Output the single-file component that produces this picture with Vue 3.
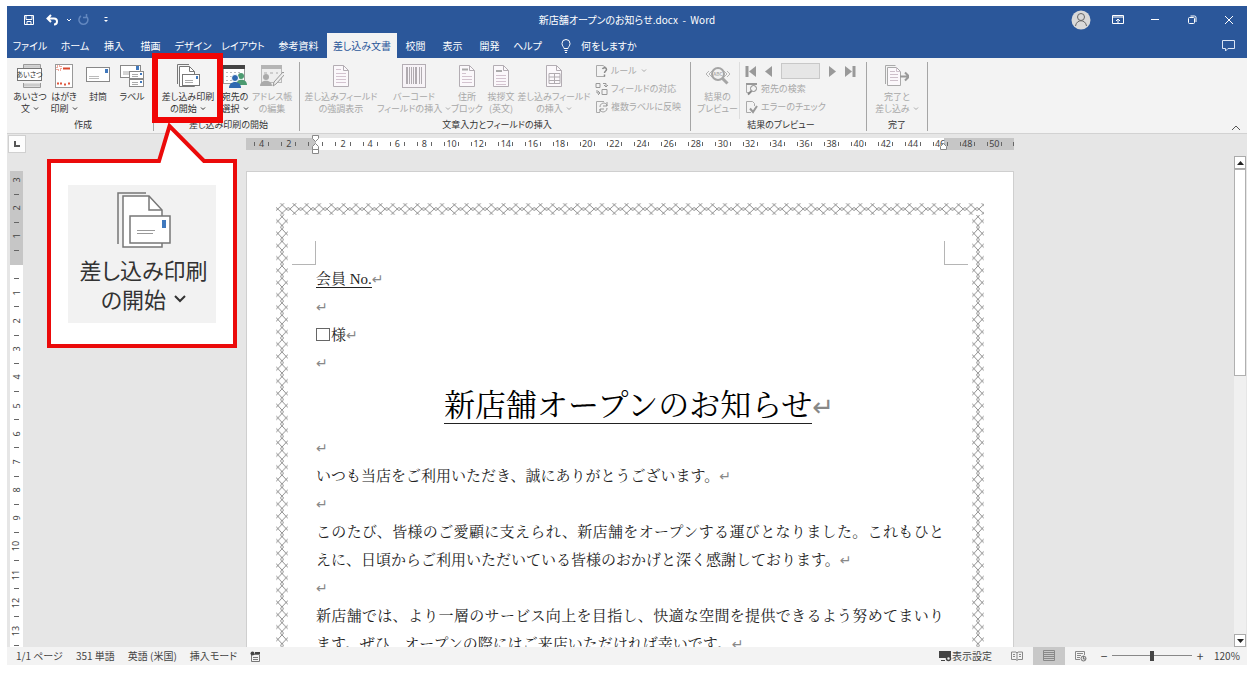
<script setup>
import { ref } from 'vue'

const tabs = ['ファイル', 'ホーム', '挿入', '描画', 'デザイン', 'レイアウト', '参考資料', '差し込み文書', '校閲', '表示', '開発', 'ヘルプ']
const activeTab = ref('差し込み文書')
const zoom = ref(50)
const record = ref('')

const page = '<path d="M4.500 1.500h10l5 5v16h-15z" fill="#fbf8fb" stroke="#b3adb3"/><path d="M14.500 1.500v5h5" fill="none" stroke="#b3adb3"/>'
const icons = {
  greeting: '<path d="M6.500 4V.5h17V4M6.500 19v4.500h17V19" fill="#ddd" stroke="#999"/><path d="M7 2.500h16M7 21h16" stroke="#ccc" stroke-width="2"/><rect x=".5" y="4.500" width="24" height="12" fill="#fff" stroke="#777"/><text x="12.500" y="13" font-size="7" text-anchor="middle" fill="#333">あいさつ</text>',
  postcard: '<rect x="4.500" y=".5" width="17" height="23" fill="#fff" stroke="#999"/><rect x="6" y="2" width="4" height="4" fill="none" stroke="#e0563c" stroke-dasharray="1 1"/><path d="M12 4.500h7" stroke="#d9472b" stroke-width="2"/><path d="M6 19.500h6M13 20.500h2M17 19.500h3" stroke="#e0563c" stroke-width="2" stroke-dasharray="2 1"/>',
  envelope: '<rect x="1.500" y="3.500" width="23" height="14" fill="#fff" stroke="#888"/><rect x="20" y="5" width="3" height="4" fill="#3f78bd"/><path d="M4 12.500h10M4 14.500h10" stroke="#bbb"/>',
  label: '<rect x="1.500" y="1.500" width="20" height="12" fill="#fff" stroke="#888"/><rect x="17" y="2" width="3" height="4" fill="#3f78bd"/><path d="M4 8h6M4 10h6" stroke="#aaa"/><rect x="10.500" y="7.500" width="14" height="7" fill="#fff" stroke="#888"/><rect x="10.500" y="15.500" width="14" height="7" fill="#fff" stroke="#888"/><path d="M13 10.500h6M13 12.500h6M13 18.500h6M13 20.500h6" stroke="#aaa"/><path d="M22 9v2M22 17v2" stroke="#3f78bd" stroke-width="2"/>',
  merge: '<path d="M2.500 20V.5H14" fill="none" stroke="#777"/><path d="M4.500 2.500h10l5 5v15h-15z" fill="#fff" stroke="#777"/><path d="M14.500 2.500v5h5" fill="none" stroke="#777"/><rect x="7.500" y="10.500" width="17" height="11" fill="#fff" stroke="#777"/><rect x="21" y="12" width="2" height="3" fill="#3f78bd"/><path d="M10 16.500h8M10 18.500h8" stroke="#aaa"/>',
  recipients: '<rect x="1.500" y="2.500" width="21" height="17" fill="#fff" stroke="#999"/><path d="M1 3h22" stroke="#444" stroke-width="4"/><path d="M4 8.500h16M4 12.500h16M4 16.500h16" stroke="#bbb" stroke-dasharray="2 2"/><circle cx="19" cy="12" r="3" fill="#4c9a70"/><path d="M14 21c0-7 11-7 11 0z" fill="#4c9a70"/><circle cx="13" cy="14" r="3.500" fill="#2e68b0" stroke="#fff"/><path d="M7 24c0-8 12-8 12 0z" fill="#2e68b0"/>',
  editlist: '<rect x="1.500" y="2.500" width="20" height="16" fill="#eee" stroke="#bbb"/><path d="M1 3h21" stroke="#b5b5b5" stroke-width="4"/><path d="M4 9h14" stroke="#ccc" stroke-width="2" stroke-dasharray="3 3"/><circle cx="6" cy="13" r="3" fill="#aaa"/><path d="M0 22c0-7 12-7 12 0z" fill="#aaa"/><path d="M13 22l1-4 9-10 2 2-9 10z" fill="#eee" stroke="#999"/>',
  highlight: page + '<path d="M7 5.500h5M7 9.500h10M7 12.500h10M7 15.500h10M7 18.500h10" stroke="#d3c3cf"/>',
  barcode: '<rect x=".5" y=".5" width="23" height="23" fill="#f7f3f7" stroke="#b3adb3"/><path d="M5 3v17M14 3v17" stroke="#b0abb0" stroke-width="2"/><path d="M7.500 3v17M9.500 3v17M11.500 3v17M17.500 3v17M19.500 3v17" stroke="#b0abb0"/>',
  address: page + '<path d="M7 5.500h6" stroke="#aaa" stroke-width="2"/><path d="M7 9.500h4M7 12.500h10M7 15.500h10M7 18.500h10" stroke="#d3c3cf"/>',
  salutation: page + '<path d="M7 7h6" stroke="#aaa" stroke-width="2"/><path d="M7 11.500h10M7 14.500h10M7 17.500h10M7 20.500h10" stroke="#d3c3cf"/>',
  field: page + '<path d="M7 9.500h11v10H7zM7 13h11M7 16.500h11M12.500 9.500v10" fill="none" stroke="#b0abb0"/>',
  preview: '<path d="M3 7L0 10l3 3M6 7l-3 3 3 3M21 7l3 3-3 3M18 7l3 3-3 3" fill="none" stroke="#b5b5b5"/><circle cx="12" cy="10" r="6" fill="#f1f1f1" stroke="#a5a5a5" stroke-width="2"/><path d="M16.500 14.500l5 5" stroke="#a5a5a5" stroke-width="3"/><text x="12" y="12" font-size="5" text-anchor="middle" fill="#999">ABC</text>',
  finish: '<path d="M.5 20V1.500h10" fill="none" stroke="#aaa"/><path d="M2.500 3.500h9l4 4v14h-13z" fill="#fbf8fb" stroke="#aaa"/><path d="M11.500 3.500v4h4M5 7.500h5M5 10.500h8M5 13.500h8M5 16.500h8" fill="none" stroke="#cdc0ca"/><path d="M15 12.500h9M20 8.500l4 4-4 4" fill="none" stroke="#999" stroke-width="2"/>',
  rules: '<path d="M8 1.500H1.500v11H10M8 1.500l3 2" fill="none" stroke="#aaa"/><path d="M7.500 5c1-2 4-1.500 4 .5 0 1.500-2 1.500-2 3.500M9.500 10.500v2" fill="none" stroke="#888" stroke-width="1.500"/>',
  match: '<path d="M1 1.500h4v4H1zM7 7.500h5v5H7z" fill="none" stroke="#999"/><path d="M8 1.500h3v3M9 3l2 2 2-2M2 8v3h3M3 9l2 2-2 2" fill="none" stroke="#999"/>',
  update: '<path d="M9 1.500H1.500v11H5" fill="none" stroke="#aaa"/><path d="M5 7c0-5 7-5 7-1M12 2v4H8M12 8c0 5-7 5-7 1M5 12V9h4" fill="none" stroke="#999"/>',
  find: '<path d="M4 10.500H1.500v-9h10" fill="none" stroke="#aaa"/><path d="M1 2h11" stroke="#999" stroke-width="2"/><circle cx="8.500" cy="6.500" r="3" fill="#f3f3f3" stroke="#888"/><path d="M6.500 9L3 12.500" stroke="#888" stroke-width="2"/>',
  check: '<path d="M9.500 6V3.500l-2-2h-6v11H6" fill="none" stroke="#aaa"/><path d="M5 8.500l3 3.500 4-6" fill="none" stroke="#999" stroke-width="2"/>'
}

const groups = [
  { key: 'create', name: '作成', buttons: [
    { icon: 'greeting', a: 'あいさつ', b: '文', drop: true },
    { icon: 'postcard', a: 'はがき', b: '印刷', drop: true },
    { icon: 'envelope', a: '封筒', b: '' },
    { icon: 'label', a: 'ラベル', b: '' }] },
  { key: 'start', name: '差し込み印刷の開始', buttons: [
    { icon: 'merge', a: '差し込み印刷', b: 'の開始', drop: true },
    { icon: 'recipients', a: '宛先の', b: '選択', drop: true },
    { icon: 'editlist', a: 'アドレス帳', b: 'の編集', off: true }] },
  { key: 'write', name: '文章入力とフィールドの挿入', buttons: [
    { icon: 'highlight', a: '差し込みフィールド', b: 'の強調表示', off: true },
    { icon: 'barcode', a: 'バーコード', b: 'フィールドの挿入', drop: true, off: true },
    { icon: 'address', a: '住所', b: 'ブロック', off: true },
    { icon: 'salutation', a: '挨拶文', b: '(英文)', off: true },
    { icon: 'field', a: '差し込みフィールド', b: 'の挿入', drop: true, off: true }],
    rows: [
      { icon: 'rules', text: 'ルール', drop: true },
      { icon: 'match', text: 'フィールドの対応' },
      { icon: 'update', text: '複数ラベルに反映' }] },
  { key: 'preview', name: '結果のプレビュー', nav: true, buttons: [
    { icon: 'preview', a: '結果の', b: 'プレビュー', off: true }],
    rows: [
      { icon: 'find', text: '宛先の検索' },
      { icon: 'check', text: 'エラーのチェック' }] },
  { key: 'finish', name: '完了', buttons: [
    { icon: 'finish', a: '完了と', b: '差し込み', drop: true, off: true }] }
]

const hCells = Array.from({ length: 28 }, (_, i) => Math.abs(i * 2 - 4))
const vCells = [3, 2, 1, 0, 1, 2, 3, 4, 5, 6, 7, 8, 9, 10, 11, 12, 13]
</script>

<template>
  <div class="shell">
    <header class="top">
      <div class="titlebar">
        <div class="quick">
          <button aria-label="上書き保存"><svg width="12" height="12"><path d="M1.500 1.500h9v9h-9zM3 1.500v4h6v-4M4 10.500v-3h4v3" fill="none" stroke="#fff" /></svg></button>
          <button aria-label="元に戻す"><svg width="14" height="12"><path d="M5 1L1.500 4.500 5 8M2 4.500h6c4 0 4 6 0 6" fill="none" stroke="#fff" stroke-width="2" /></svg></button>
          <button class="slim" aria-label="元に戻す履歴"><svg width="6" height="4"><path d="M1 1l2 2 2-2" fill="none" stroke="#fff" /></svg></button>
          <button aria-label="やり直し"><svg width="12" height="12"><path d="M9.500 2.500A4.500 4.500 0 1 1 4 2M9.500 0v3.500H6" fill="none" stroke="#6287bf" stroke-width="1.500" /></svg></button>
          <button class="last" aria-label="ツールバーの設定"><svg width="6" height="7"><path d="M1.500 1.500h3" stroke="#fff" /><path d="M1 4h4L3 6z" fill="#fff" /></svg></button>
        </div>
        <h1>新店舗オープンのお知らせ.docx&nbsp; -&nbsp; Word</h1>
        <div class="win">
          <button aria-label="アカウント"><svg width="20" height="20"><circle cx="10" cy="10" r="9.500" fill="#d9d9d9" /><circle cx="10" cy="7" r="3.500" fill="none" stroke="#666" /><path d="M4.500 16c1-7 10-7 11 0" fill="none" stroke="#666" /></svg></button>
          <button aria-label="リボンの表示オプション"><svg width="12" height="10"><path d="M.5 .5h11v8H.5zM.5 2h11M6 8V4M4 6l2-2 2 2" fill="none" stroke="#fff" /></svg></button>
          <button aria-label="最小化"><svg width="10" height="10"><path d="M1 4.500h8" stroke="#fff" /></svg></button>
          <button aria-label="元のサイズに戻す"><svg width="10" height="10"><rect x="1.500" y="2.500" width="6" height="6" rx="1" fill="none" stroke="#fff" /><path d="M3.500 1h4q1.500 0 1.500 1.500V7" fill="none" stroke="#fff" /></svg></button>
          <button aria-label="閉じる"><svg width="10" height="10"><path d="M1 1l8 8M9 1L1 9" stroke="#fff" /></svg></button>
        </div>
      </div>
      <div class="tabbar">
        <nav class="tabs">
          <button v-for="t in tabs" :key="t" :class="{ active: t === activeTab }" @click="activeTab = t">{{ t }}</button>
        </nav>
        <button class="tell"><svg width="10" height="14"><path d="M3 9.500C3 8 1 7 1 4.500a4 4 0 0 1 8 0C9 7 7 8 7 9.500zM3.500 11.500h3M4 13.500h2" fill="none" stroke="#fff" /></svg>何をしますか</button>
        <button class="comment" aria-label="コメント"><svg width="13" height="12"><path d="M.5 .5h12v8H6l-2.500 2.500V8.500h-3z" fill="none" stroke="#dbe5f5" /></svg></button>
      </div>
    </header>

    <section class="ribbon">
      <div v-for="g in groups" :key="g.key" class="group" :class="g.key">
        <div class="body">
          <button v-for="b in g.buttons" :key="b.icon" class="big" :class="{ off: b.off }">
            <svg :width="b.off ? 24 : 26" height="25" v-html="icons[b.icon]"></svg>
            <span>{{ b.a }}</span>
            <span v-if="b.b">{{ b.b }}<svg v-if="b.drop" class="chev" width="6" height="4"><path d="M1 .5l2 2 2-2" fill="none" stroke="currentColor" /></svg></span>
          </button>
          <div v-if="g.rows" class="rows">
            <div v-if="g.nav" class="nav">
              <button aria-label="先頭のレコード"><svg width="12" height="11"><path d="M2 0v11" stroke="#999" stroke-width="3" /><path d="M11 0v11L4 5.500z" fill="#999" /></svg></button>
              <button aria-label="前のレコード"><svg width="8" height="11"><path d="M7 0v11L0 5.500z" fill="#999" /></svg></button>
              <input v-model="record" aria-label="レコード" />
              <button aria-label="次のレコード"><svg width="8" height="11"><path d="M1 0v11l7-5.500z" fill="#999" /></svg></button>
              <button aria-label="最後のレコード"><svg width="12" height="11"><path d="M10 0v11" stroke="#999" stroke-width="3" /><path d="M1 0v11l7-5.500z" fill="#999" /></svg></button>
            </div>
            <button v-for="r in g.rows" :key="r.icon" class="small">
              <svg width="14" height="14" v-html="icons[r.icon]"></svg>{{ r.text }}<svg v-if="r.drop" class="chev" width="6" height="4"><path d="M1 .5l2 2 2-2" fill="none" stroke="currentColor" /></svg>
            </button>
          </div>
        </div>
        <h2>{{ g.name }}</h2>
      </div>
      <button class="collapse" aria-label="リボンを折りたたむ"><svg width="10" height="6"><path d="M1 5l4-4 4 4" fill="none" stroke="#555" /></svg></button>
    </section>

    <main class="work">
      <button class="corner" aria-label="タブの種類"><svg width="6" height="6"><path d="M1 0v5h5" fill="none" stroke="#555" stroke-width="2" /></svg></button>
      <div class="hruler-row">
        <div class="hruler">
          <span v-for="(n, i) in hCells" :key="i" class="hcell"><i></i>{{ n || '' }}<i></i></span>
          <i class="end"></i>
          <svg class="indent" width="9" height="20"><path d="M1.500 .5h6v3l-3 3-3-3zM4.500 8.500l3 3v3h-6v-3zM1.500 14.500h6v4h-6z" fill="#fff" stroke="#888" /></svg>
          <svg class="rindent" width="9" height="8"><path d="M4.500 .5l3 3v3h-6v-3z" fill="#fff" stroke="#888" /></svg>
        </div>
      </div>
      <div class="vruler">
        <div class="vcells">
          <template v-for="(n, i) in vCells" :key="i">
            <span><b>{{ n || '' }}</b></span>
            <span><i></i></span>
          </template>
        </div>
      </div>
      <div class="canvas">
        <article class="page">
          <svg class="defs" width="0" height="0">
            <defs>
              <pattern id="lace-h" width="12.300" height="12" patternUnits="userSpaceOnUse"><path d="M8.200 0L0 7.600M4.100 0l8.200 7.600M8.200 12L0 4.400M4.100 12l8.200-7.600" fill="none" stroke="#777" stroke-width=".8" /></pattern>
              <pattern id="lace-v" width="12" height="12.300" patternUnits="userSpaceOnUse"><path d="M0 8.200L7.600 0M0 4.100l7.600 8.200M12 8.200L4.400 0M12 4.100l-7.600 8.200" fill="none" stroke="#777" stroke-width=".8" /></pattern>
            </defs>
          </svg>
          <svg class="lace top-lace"><rect width="100%" height="12" fill="url(#lace-h)" /></svg>
          <svg class="lace"><rect width="12" height="100%" fill="url(#lace-v)" /></svg>
          <div class="sheet">
            <div class="crops"><i class="crop left"></i><i class="crop right"></i></div>
            <div class="text">
              <p><u>会員 No.</u><em>↵</em></p>
              <p><em>↵</em></p>
              <p><span class="blank"></span>様<em>↵</em></p>
              <p><em>↵</em></p>
              <h3><u>新店舗オープンのお知らせ</u><em>↵</em></h3>
              <p><em>↵</em></p>
              <p>いつも当店をご利用いただき、誠にありがとうございます。<em>↵</em></p>
              <p><em>↵</em></p>
              <p>このたび、皆様のご愛顧に支えられ、新店舗をオープンする運びとなりました。これもひとえに、日頃からご利用いただいている皆様のおかげと深く感謝しております。<em>↵</em></p>
              <p><em>↵</em></p>
              <p>新店舗では、より一層のサービス向上を目指し、快適な空間を提供できるよう努めてまいります。ぜひ、オープンの際にはご来店いただければ幸いです。<em>↵</em></p>
            </div>
          </div>
          <svg class="lace"><rect width="12" height="100%" fill="url(#lace-v)" /></svg>
        </article>
      </div>
      <div class="scroll">
        <button aria-label="上へ"><svg width="7" height="4"><path d="M0 4h7L3.500 0z" fill="#222" /></svg></button>
        <div class="track"><div class="thumb"></div></div>
        <button aria-label="下へ"><svg width="7" height="4"><path d="M0 0h7L3.500 4z" fill="#222" /></svg></button>
      </div>
    </main>

    <footer class="status">
      <span>1/1 ページ</span><span>351 単語</span><span>英語 (米国)</span><span>挿入モード</span>
      <svg width="11" height="11"><path d="M1.500 3.500h8v7h-8zM3 6.500h5M3 8.500h5" fill="none" stroke="#777" /><circle cx="2.500" cy="2.500" r="2" fill="#444" /><path d="M5 2h5" stroke="#444" stroke-width="2" /></svg>
      <button class="display"><svg width="13" height="12"><path d="M0 1h12v7H0zM2 10h4v1H2z" fill="#444" /><circle cx="9.500" cy="8.500" r="2" fill="#eee" stroke="#444" stroke-width="1.500" /></svg>表示設定</button>
      <div class="views">
        <button aria-label="閲覧モード"><svg width="12" height="10"><path d="M6 1.500v8M.5 1H5l1 1 1-1h4.500v7.500H7l-1 1-1-1H.5zM2 3.500h2M2 5.500h2M8 3.500h2M8 5.500h2" fill="none" stroke="#888" /></svg></button>
        <button class="on" aria-label="印刷レイアウト"><svg width="12" height="12"><path d="M.5 .5h11M.5 2.500h11M.5 4.500h11M.5 6.500h11M.5 8.500h11M.5 10.500h11M.5 .5v10M11.500 .5v10" fill="none" stroke="#888" /></svg></button>
        <button aria-label="Web レイアウト"><svg width="12" height="11"><path d="M5 8.500H.5v-8h9V4M2 2.500h6M2 4.500h4M2 6.500h3" fill="none" stroke="#888" /><circle cx="8.500" cy="7.500" r="2.500" fill="#ddd" stroke="#777" /><path d="M8.500 5v3H11" fill="none" stroke="#777" /></svg></button>
      </div>
      <div class="zoomer">
        <button aria-label="縮小">−</button>
        <input v-model="zoom" type="range" min="0" max="100" aria-label="ズーム" />
        <button aria-label="拡大">+</button>
      </div>
      <span class="pct">120%</span>
    </footer>

    <div class="mark"></div>
    <aside class="callout">
      <svg width="190" height="228"><path d="M2 41H112L122.500 6 157 41H188V226H2z" fill="#fff" stroke="#eb0a0a" stroke-width="4" /></svg>
      <div class="panel">
        <svg width="54" height="56" viewBox="0 0 54 56"><path d="M1 52V1h28" fill="none" stroke="#777" stroke-width="1.500" /><path d="M45 50v5H6V4h26l13 14v6z" fill="#fff" stroke="#777" stroke-width="1.500" /><path d="M32 4v14h13" fill="none" stroke="#777" stroke-width="1.500" /><path d="M13 24h40v27H13z" fill="#fff" stroke="#777" stroke-width="1.500" /><path d="M45 28h4v8h-4z" fill="#3f78bd" /><path d="M20 38.500h18M20 41.500h16" stroke="#999" /></svg>
        <span>差し込み印刷</span>
        <span>の開始<svg width="12" height="8"><path d="M1 1l5 5 5-5" fill="none" stroke="#333" stroke-width="2" /></svg></span>
      </div>
    </aside>
  </div>
</template>

<style>
body { margin: 0; background: #fff; }
</style>

<style scoped>
.shell { position: relative; display: flex; flex-direction: column; height: 100vh; box-sizing: border-box; padding: 6px 9px 9px 7px; font: 10px/12px "Noto Sans CJK JP", sans-serif; font-feature-settings: "palt"; color: #333; overflow: hidden; }
button { border: 0; padding: 0; margin: 0; background: none; font: inherit; font-feature-settings: inherit; color: inherit; display: flex; align-items: center; justify-content: center; white-space: nowrap; }
h1, h2, h3, p { margin: 0; font-weight: 400; }
svg { display: block; flex: none; }
.top { background: #2b579a; color: #fff; }
.titlebar { height: 27px; display: grid; grid-template-columns: 1fr auto 1fr; align-items: center; }
.quick { display: flex; padding-left: 10px; }
.quick button { width: 24px; }
.quick .slim { width: 8px; }
.quick .slim + button { width: 20px; }
.quick .last { width: 26px; }
h1 { font-size: 10px; line-height: 16px; }
.win { display: flex; justify-content: flex-end; height: 26px; }
.win button { width: 37px; }
.tabbar { display: flex; height: 25px; }
.tabs { display: grid; grid-template-columns: 46px 44px 34px 39px 46px 54px 57px 70px 37px 37px 37px 39px; }
.tabs .active { background: #f3f3f3; color: #2b579a; }
.tell { gap: 10px; margin-left: 14px; }
.comment { margin-left: auto; width: 38px; }

.ribbon { display: flex; height: 75px; background: #f3f3f3; border-bottom: 1px solid #d2d2d2; position: relative; font-size: 9px; }
.group { display: flex; flex-direction: column; box-sizing: border-box; border-right: 1px solid #a5a5a5; margin: 4px 0 2px; }
.body { display: flex; flex: 1; }
h2 { text-align: center; font-size: 9px; line-height: 12px; }
.create { width: 147px; padding-left: 6px; }
.start { width: 146px; padding-left: 4px; }
.write { width: 391px; padding-left: 4px; }
.preview { width: 176px; padding-left: 5px; }
.finish { width: 61px; }
.big { flex-direction: column; justify-content: flex-start; width: 34px; padding-top: 2px; }
.big > span { display: flex; align-items: center; gap: 3px; height: 12px; }
.big > svg + span { margin-top: 2px; }
.start .big:first-child { width: 60px; }
.start .big:last-child { width: 40px; }
.write .big:first-child { width: 74px; }
.write .big:nth-child(2) { width: 72px; }
.write .big:nth-child(5) { width: 72px; }
.preview .big { width: 44px; border-right: 1px solid #ddd; }
.finish .big { width: 60px; }
.off, .small { color: #a8a8a8; }
.rows { display: flex; flex-direction: column; padding-left: 5px; }
.small { height: 18px; gap: 2px; justify-content: flex-start; }
.small .chev { margin-left: 2px; }
.nav { display: flex; align-items: center; gap: 8px; height: 18px; }
.nav input { width: 39px; height: 16px; box-sizing: border-box; border: 1px solid #c8c8c8; background: #e6e6e6; padding: 0; }
.collapse { position: absolute; right: 6px; bottom: 2px; }

.work { flex: 1; min-height: 0; display: grid; grid-template-columns: 19px 1fr 13px; grid-template-rows: 37px 1fr; background: #e6e6e6; }
.corner { width: 18px; height: 18px; margin: 1px 0 0 1px; background: #fdfdfd; border: 1px solid #d0d0d0; box-sizing: border-box; }
.hruler-row { display: flex; justify-content: center; padding-top: 4px; grid-column: 2; }
.hruler { position: relative; box-sizing: border-box; width: 768px; max-width: 100%; height: 12px; display: flex; padding-left: 2px; background: linear-gradient(90deg, #c6c6c6 70px, #fff 70px, #fff calc(100% - 70px), #c6c6c6 calc(100% - 70px)); font: 9px/12px "Noto Sans", sans-serif; color: #444; }
.hcell { flex: 1; display: flex; align-items: center; justify-content: space-between; padding: 0 6px; }
.hcell i, .end { width: 1px; height: 4px; background: #666; }
.end { margin: 4px 0 0 5px; }
.indent { position: absolute; left: 65px; top: -3px; }
.rindent { position: absolute; right: 66px; top: 5px; }
.vruler { grid-column: 1; grid-row: 2; width: 13px; margin-left: 3px; background: linear-gradient(#c6c6c6 94px, #fff 94px); overflow: hidden; font: 9px/12px "Noto Sans", sans-serif; color: #444; display: flex; }
.vcells { flex: 1; display: flex; flex-direction: column; padding-top: 2px; margin-bottom: -5px; }
.vcells span { flex: 1; min-height: 0; display: flex; align-items: center; justify-content: center; }
.vcells b { font-weight: 400; transform: rotate(-90deg); }
.vcells i { width: 5px; height: 1px; background: #666; }
.canvas { display: flex; justify-content: center; min-height: 0; overflow: hidden; }
.page { box-sizing: border-box; width: 768px; max-width: 100%; background: #fff; border: 1px solid #cfcfcf; border-bottom: 0; display: grid; grid-template-columns: 12px 1fr 12px; grid-template-rows: 12px 1fr; padding: 31px 29px 0; overflow: hidden; }
.defs { position: absolute; }
.lace { width: 12px; height: 100%; min-height: 0; }
.top-lace { grid-column: 1 / -1; width: 100%; height: 12px; }
.sheet { min-height: 0; overflow: hidden; padding-top: 26px; }
.crops { display: flex; justify-content: space-between; margin: 0 4px; }
.crop { width: 23px; height: 23px; border-bottom: 1px solid #b5b5b5; }
.crop.left { border-right: 1px solid #b5b5b5; }
.crop.right { border-left: 1px solid #b5b5b5; }
.text { margin: 0 28px; font: 15px/28px "Liberation Serif", "Noto Serif CJK JP", "Noto Sans CJK JP", serif; font-feature-settings: normal; color: #222; }
.text p { text-align: justify; min-height: 28px; }
.text u { text-decoration: none; border-bottom: 1px solid #222; }
.text em { font: 14px/14px "DejaVu Sans", sans-serif; color: #888; }
.text h3 { font-size: 31px; line-height: 57px; height: 57px; text-align: center; color: #000; padding-left: 18px; }
.text h3 em { font-size: 26px; }
.blank { display: inline-block; width: 12px; height: 11px; border: 1px solid #666; margin-right: 1px; vertical-align: -1px; }
.scroll { grid-column: 3; grid-row: 1 / -1; margin: 22px 1px 0 0; display: flex; flex-direction: column; }
.scroll button { height: 13px; border: 1px solid #aaa; background: #fff; }
.track { flex: 1; background: #f0f0f0; }
.thumb { height: 44%; background: #fff; border: 1px solid #b0b0b0; }

.status { display: flex; align-items: center; height: 18px; gap: 13px; padding-left: 9px; background: #f3f3f3; color: #444; }
.display { margin-left: auto; }
.views { display: flex; align-self: stretch; margin-left: -4px; }
.views button { width: 32px; }
.views .on { background: #c8c8c8; }
.zoomer { display: flex; align-items: center; gap: 4px; margin-left: -10px; }
.zoomer button { font-size: 12px; width: 8px; }
input[type="range"] { appearance: none; margin: 0; width: 80px; height: 12px; background: linear-gradient(transparent 5px, #888 5px, #888 6px, transparent 6px); }
input[type="range"]::-webkit-slider-thumb { appearance: none; width: 4px; height: 10px; background: #444; }
.pct { width: 33px; margin-left: -3px; }

.mark { position: absolute; left: 152px; top: 53px; width: 59px; height: 58px; border: 6px solid #f00505; }
.callout { position: absolute; left: 47px; top: 120px; }
.panel { position: absolute; left: 21px; top: 65px; width: 148px; height: 138px; box-sizing: border-box; padding: 7px 0 0 3px; background: #f2f2f2; display: flex; flex-direction: column; align-items: center; font-size: 22px; line-height: 29px; }
.panel > svg { margin-bottom: 7px; }
.panel span { display: flex; align-items: center; gap: 8px; }
</style>
